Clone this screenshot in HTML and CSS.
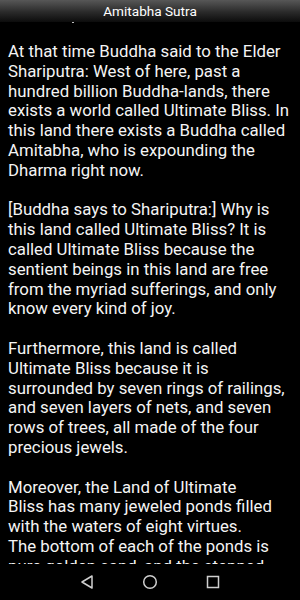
FILE: index.html
```html
<!DOCTYPE html>
<html lang="en">
<head>
<meta charset="utf-8">
<title>Amitabha Sutra</title>
<link rel="stylesheet" href="styles.css">
</head>
<body>
<div class="screen">
  <header class="titlebar">Amitabha Sutra</header>
  <main class="content">
    <span class="speck"></span>
    <p>At that time Buddha said to the Elder<br>Shariputra: West of here, past a<br>hundred billion Buddha-lands, there<br>exists a world called Ultimate Bliss. In<br>this land there exists a Buddha called<br>Amitabha, who is expounding the<br>Dharma right now.</p>
    <p>[Buddha says to Shariputra:] Why is<br>this land called Ultimate Bliss? It is<br>called Ultimate Bliss because the<br>sentient beings in this land are free<br>from the myriad sufferings, and only<br>know every kind of joy.</p>
    <p>Furthermore, this land is called<br>Ultimate Bliss because it is<br>surrounded by seven rings of railings,<br>and seven layers of nets, and seven<br>rows of trees, all made of the four<br>precious jewels.</p>
    <p>Moreover, the Land of Ultimate<br>Bliss has many jeweled ponds filled<br>with the waters of eight virtues.<br>The bottom of each of the ponds is<br>pure golden sand, and the stepped</p>
  </main>
  <nav class="navbar">
    <svg class="nav-icon" width="16" height="16" viewBox="0 0 16 16"><path d="M13 2 L3 8 L13 14 Z" fill="none" stroke="#cfcfcf" stroke-width="1.5" stroke-linejoin="round"/></svg>
    <svg class="nav-icon" width="16" height="16" viewBox="0 0 16 16"><circle cx="8" cy="8" r="6.3" fill="none" stroke="#cfcfcf" stroke-width="1.5"/></svg>
    <svg class="nav-icon" width="16" height="16" viewBox="0 0 16 16"><rect x="2.5" y="2.5" width="11" height="11" fill="none" stroke="#cfcfcf" stroke-width="1.5"/></svg>
  </nav>
</div>
</body>
</html>
```

FILE: styles.css
```css
html, body {
  margin: 0;
  padding: 0;
  background: #000;
}

.screen {
  width: 300px;
  height: 600px;
  display: flex;
  flex-direction: column;
  background: #000;
  font-family: Roboto, "Noto Sans", sans-serif;
  color: #fff;
  overflow: hidden;
}

.titlebar {
  height: 22px;
  flex: 0 0 22px;
  background: linear-gradient(to bottom, #575757 0%, #2a2a2a 55%, #0c0c0c 100%);
  color: #fff;
  font-size: 13.6px;
  line-height: 22px;
  text-align: center;
}

.content {
  position: relative;
  flex: 1 1 auto;
  overflow: hidden;
  padding: 20px 8px 0 8px;
  font-size: 16.8px;
  line-height: 19.8px;
  color: #f4f4f4;
}

.content p {
  margin: 0 0 19.8px 0;
  white-space: nowrap;
}

.speck {
  position: absolute;
  left: 72px;
  top: 0;
  width: 2px;
  height: 1px;
  background: #bbb;
}

.navbar {
  flex: 0 0 36px;
  height: 36px;
  display: flex;
  align-items: center;
  justify-content: center;
  gap: 47px;
  background: #000;
}

.nav-icon {
  display: block;
}
```
